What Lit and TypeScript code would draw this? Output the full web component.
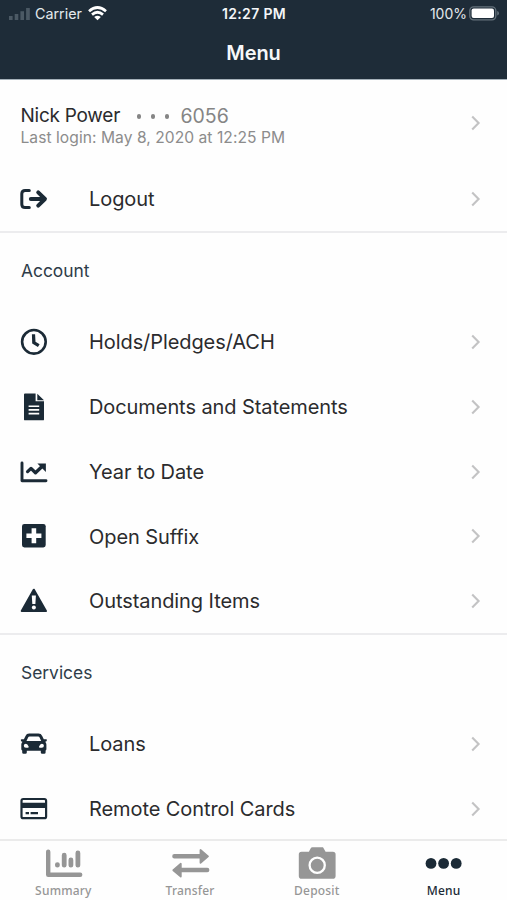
import { LitElement, html, css, svg, SVGTemplateResult } from "lit";
import { customElement, property } from "lit/decorators.js";

const icons: Record<string, SVGTemplateResult> = {
  logout: svg`<g fill="none" stroke="currentColor" stroke-linecap="round" stroke-linejoin="round">
    <path stroke-width="3" d="M10.3 6.4H6.2Q2.8 6.4 2.8 9.8V20.2Q2.8 23.6 6.2 23.6H10.3"/>
    <path stroke-width="3.9" d="M11.8 15H25.6M19.2 8.3L26 15L19.2 21.7"/></g>`,
  clock: svg`<circle cx="14.9" cy="14.8" r="11.8" fill="none" stroke="currentColor" stroke-width="2.6"/>
    <path d="M12.9 7.2H16.1L16.5 14.7L20.6 17.2L18.9 19.9L13.2 16.6Z" fill="currentColor"/>`,
  document: svg`<path fill="currentColor" d="M6 1.4H16.6V9.3H25V27.4Q25 28.3 24 28.3H6Q5 28.3 5 27.4V2.4Q5 1.4 6 1.4ZM18.3 1.8L25 8.2H18.3Z"/>
    <path stroke="#fff" stroke-width="1.6" d="M9.6 14.2H20.2M9.6 17.9H20.2M9.6 21.6H20.2"/>`,
  trend: svg`<path fill="none" stroke="currentColor" stroke-width="2.9" stroke-linecap="round" stroke-linejoin="round" d="M3 6V23.7H27"/>
    <path fill="none" stroke="currentColor" stroke-width="3.3" stroke-linecap="round" stroke-linejoin="round" d="M8.6 14.6L12 11.4L16.5 15.8L22.5 10"/>
    <path fill="currentColor" d="M18.4 6.4H26.9V14.9Z"/>`,
  plus: svg`<rect x="3" y="2.9" width="23.7" height="23.6" rx="2.4" fill="currentColor"/>
    <path stroke="#fff" stroke-width="4.6" d="M7.4 14.7H22.4M14.9 7.2V22.2"/>`,
  warning: svg`<path fill="currentColor" stroke="currentColor" stroke-width="2.2" stroke-linejoin="round" d="M14.8 3.8L26.9 25H2.8Z"/>
    <path fill="#fff" d="M12.8 9.5H16.9L16.4 18H13.3Z"/><circle cx="14.85" cy="21.5" r="2" fill="#fff"/>`,
  car: svg`<path fill="currentColor" fill-rule="evenodd" d="M10.2 4.6H19.4Q22.2 4.6 23.2 7L24.8 10.2H27Q28.2 10.2 27.9 11.3Q27.7 12.6 26.5 12.7H26.1Q27.4 13.8 27.4 15.6V20Q27.4 21 26.6 21.6V23.4Q26.6 24.8 25.2 24.8H23.2Q21.8 24.8 21.8 23.4V21.8H7.8V23.4Q7.8 24.8 6.4 24.8H4.6Q3.2 24.8 3.2 23.4V21.6Q2.3 21 2.3 20V15.6Q2.3 13.8 3.6 12.7H3.1Q1.9 12.6 1.8 11.3Q1.6 10.2 2.8 10.2H4.9L6.5 7Q7.5 4.6 10.2 4.6ZM10.6 7.6Q9.5 7.6 9.1 8.6L7.5 12H22.2L20.6 8.6Q20.2 7.6 19.1 7.6ZM6.9 14.8A2.1 2 0 1 0 6.9 18.8H9.2A1.2 1.2 0 0 0 9.5 17.2Q8.6 15 6.9 14.8ZM22.8 14.8Q21.1 15 20.2 17.2A1.2 1.2 0 0 0 20.5 18.8H22.8A2.1 2 0 1 0 22.8 14.8Z"/>`,
  card: svg`<rect x="2.5" y="5" width="24.6" height="19.2" rx="1.8" fill="none" stroke="currentColor" stroke-width="2.2"/>
    <path fill="currentColor" d="M2.5 8.8H27V14H2.5ZM6.6 17.9H10V20.2H6.6ZM11.6 17.9H19V20.2H11.6Z"/>`,
};

const tabIcons: Record<string, SVGTemplateResult> = {
  summary: svg`<path fill="none" stroke="currentColor" stroke-width="4.4" stroke-linecap="round" stroke-linejoin="round" d="M5.2 4.8V27.8H37.2"/>
    <path stroke="currentColor" stroke-width="4.8" stroke-linecap="round" d="M14.4 17.6V18.2M21.2 8.2V18.2M27.9 13V18.2M34.9 6V18.2"/>`,
  transfer: svg`<path stroke="currentColor" stroke-width="4.4" stroke-linecap="round" d="M4.4 9.3H32M10 23H37.2"/>
    <path fill="currentColor" stroke="currentColor" stroke-width="1.8" stroke-linejoin="round" d="M30.5 3V15.8L38 9.4ZM10.8 16.8V29.6L3.3 23.2Z"/>`,
  deposit: svg`<path fill="currentColor" d="M15.5 .3H26L28.6 4.7H35.8Q38.6 4.7 38.6 7.4V28.9Q38.6 31.7 35.8 31.7H4.6Q1.8 31.7 1.8 28.9V7.4Q1.8 4.7 4.6 4.7H11.9L13.6 1.4Q14.2 .3 15.5 .3Z"/>
    <circle cx="20.2" cy="18.2" r="7.6" fill="none" stroke="#fff" stroke-width="2.3"/>`,
  menu: svg`<circle cx="7" cy="16.4" r="5.4" fill="currentColor"/><circle cx="19.6" cy="16.4" r="5.4" fill="currentColor"/><circle cx="32.2" cy="16.4" r="5.4" fill="currentColor"/>`,
};

const chevron = html`<svg class="chevron" width="12" height="18" viewBox="0 0 12 18"><path d="M2.2 2.6L8.6 9L2.2 15.4" fill="none" stroke="#c3c3c4" stroke-width="2.1"/></svg>`;

@customElement("status-bar")
class StatusBar extends LitElement {
  static styles = css`
    :host { display: grid; grid-template-columns: 1fr auto 1fr; align-items: center; height: 27px; padding: 0 8px 0 9px; font-size: 14px; color: #e4e9ed; }
    .left, .right { display: flex; align-items: center; }
    .right { justify-content: flex-end; }
    .carrier { margin: 0 6px 0 5px; font-size: 14.3px; }
    .time { font-weight: 600; font-size: 14px; letter-spacing: 0.35px; color: #f4f6f8; }
    .percent { margin-right: 2px; letter-spacing: 0; }
  `;
  render() {
    return html`
      <div class="left">
        <svg width="21" height="14" viewBox="0 0 21 14"><path fill="#4b5964" d="M0 9h3.6v4H0zM5.7 7h3.6v6H5.7zM11.4 4.3H15V13h-3.6zM17.1 1h3.7v12h-3.7z"/></svg>
        <span class="carrier">Carrier</span>
        <svg width="19" height="15" viewBox="0 0 19 15"><g fill="none" stroke="#fff" stroke-width="2.7"><path d="M1 5.2Q9.5 -2.2 18 5.2"/><path d="M4 8.6Q9.5 3.9 15 8.6"/></g><path fill="#fff" d="M6.2 11Q9.5 8.3 12.8 11L9.5 14.3Z"/></svg>
      </div>
      <span class="time">12:27 PM</span>
      <div class="right">
        <span class="percent">100%</span>
        <svg width="30" height="15" viewBox="0 0 30 15"><rect x=".8" y=".8" width="26" height="13" rx="3.8" fill="none" stroke="#64717b" stroke-width="1.3"/><rect x="2.6" y="2.6" width="22.4" height="9.4" rx="2" fill="#fff"/><path d="M28.2 5Q30 5.6 30 7.3T28.2 9.6Z" fill="#64717b"/></svg>
      </div>`;
  }
}

@customElement("menu-row")
class MenuRow extends LitElement {
  @property() icon = "";
  @property() label = "";
  static styles = css`
    :host { display: flex; align-items: center; height: 64.75px; padding: 0 25px 0 19px; box-sizing: border-box; }
    .icon { width: 30px; height: 30px; color: #1b2a36; flex: none; }
    .icon, .chevron { margin-top: 0.6px; }
    .label { flex: 1; margin: 1.2px 0 0 40px; font-size: 20px; letter-spacing: -0.08px; color: #2b2b2d; white-space: nowrap; }
  `;
  render() {
    return html`<svg class="icon" viewBox="0 0 30 30">${icons[this.icon]}</svg>
      <span class="label">${this.label}</span>${chevron}`;
  }
}

@customElement("tab-item")
class TabItem extends LitElement {
  @property() icon = "";
  @property() label = "";
  @property({ type: Boolean }) active = false;
  static styles = css`
    :host { flex: 1; display: flex; flex-direction: column; align-items: center; color: #969696; }
    .icon { width: 40px; height: 32px; margin-top: 6px; }
    .label { font: 500 12px/16px "Noto Sans", sans-serif; letter-spacing: 0.2px; margin-top: 4px; color: #969696; }
    .active .label, .active { color: #1b2a36; }
    .tab { display: flex; flex-direction: column; align-items: center; }
  `;
  render() {
    return html`<div class="tab ${this.active ? "active" : ""}">
      <svg class="icon" viewBox="0 0 40 32">${tabIcons[this.icon]}</svg>
      <span class="label">${this.label}</span></div>`;
  }
}

@customElement("app-root")
class AppRoot extends LitElement {
  static styles = css`
    :host { display: flex; flex-direction: column; height: 900px; overflow: hidden; background: #fefefe; font-family: Inter, sans-serif; }
    header { height: 79px; background: #1e2c38; border-bottom: 1px solid #a5b1b9; flex: none; }
    h1 { margin: 0; height: 52px; line-height: 52px; text-align: center; font-size: 20px; font-weight: 600; color: #f6f8f9; letter-spacing: -0.1px; }
    main { flex: 1; min-height: 0; overflow: hidden; }
    .user { display: flex; align-items: center; justify-content: space-between; height: 86.5px; padding: 0 25px 0 20.5px; }
    .who { padding-top: 3.5px; }
    .name { display: flex; align-items: center; font-size: 19px; line-height: 24px; color: #2b2b2d; letter-spacing: -0.25px; }
    .dots { display: flex; gap: 9.6px; margin: 2px 11.5px 0 16.5px; }
    .dot { width: 4.4px; height: 4.4px; border-radius: 50%; background: #858585; }
    .number { color: #858585; font-size: 19.5px; letter-spacing: 0; }
    .login { font-size: 15.6px; line-height: 19px; letter-spacing: 0.05px; color: #8c8c8c; }
    .group { border-bottom: 2px solid #ececee; }
    h2 { margin: 0; height: 76.1px; line-height: 76px; padding-left: 21px; font-size: 17.4px; font-weight: 400; color: #2e3c49; }
    nav { display: flex; height: 59px; flex: none; border-top: 2px solid #ebebeb; background: #fefefe; }
  `;
  render() {
    const row = (icon: string, label: string) => html`<menu-row icon=${icon} label=${label}></menu-row>`;
    return html`
      <header><status-bar></status-bar><h1>Menu</h1></header>
      <main>
        <section class="group">
          <div class="user">
            <div class="who">
              <div class="name"><span>Nick Power</span><span class="dots"><i class="dot"></i><i class="dot"></i><i class="dot"></i></span><span class="number">6056</span></div>
              <div class="login">Last login: May 8, 2020 at 12:25 PM</div>
            </div>
            ${chevron}
          </div>
          ${row("logout", "Logout")}
        </section>
        <section class="group">
          <h2>Account</h2>
          ${row("clock", "Holds/Pledges/ACH")}
          ${row("document", "Documents and Statements")}
          ${row("trend", "Year to Date")}
          ${row("plus", "Open Suffix")}
          ${row("warning", "Outstanding Items")}
        </section>
        <section>
          <h2>Services</h2>
          ${row("car", "Loans")}
          ${row("card", "Remote Control Cards")}
        </section>
      </main>
      <nav>
        <tab-item icon="summary" label="Summary"></tab-item>
        <tab-item icon="transfer" label="Transfer"></tab-item>
        <tab-item icon="deposit" label="Deposit"></tab-item>
        <tab-item icon="menu" label="Menu" active></tab-item>
      </nav>`;
  }
}
